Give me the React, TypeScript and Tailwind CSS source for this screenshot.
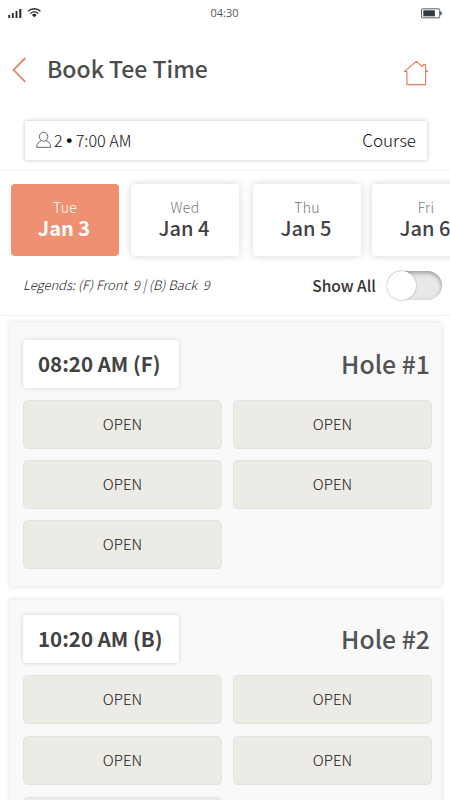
import React from "react";

type Day = { name: string; date: string; active?: boolean; gap: string };
type Slot = { time: string; hole: string; open: number; spacing: string; rows: string };

const days: Day[] = [
  { name: "Tue", date: "Jan 3", active: true, gap: "" },
  { name: "Wed", date: "Jan 4", gap: "ml-3" },
  { name: "Thu", date: "Jan 5", gap: "ml-[14px]" },
  { name: "Fri", date: "Jan 6", gap: "ml-[11px]" },
];

const slots: Slot[] = [
  { time: "08:20 AM (F)", hole: "Hole #1", open: 5, spacing: "pt-4", rows: "gap-y-[11px]" },
  { time: "10:20 AM (B)", hole: "Hole #2", open: 5, spacing: "pt-[14px]", rows: "gap-y-3" },
];

function StatusBar() {
  return (
    <div className="flex h-[26px] items-center justify-between pl-2 pr-2">
      <svg width="34" height="12" viewBox="0 0 34 12" className="w-[119px] flex-none" preserveAspectRatio="xMinYMid">
        <g fill="#22292d">
          <rect x="0.3" y="8" width="1.8" height="3" />
          <rect x="3.9" y="6" width="1.8" height="5" />
          <rect x="7.6" y="4" width="1.8" height="7" />
          <rect x="11.3" y="2" width="2" height="9" />
          <path d="M26.3 10.3l-2.4-2.4a3.4 3.4 0 0 1 4.8 0z" />
        </g>
        <g fill="none" stroke="#22292d" strokeWidth="1.3">
          <path d="M20.1 4.3a8.8 8.8 0 0 1 12.4 0" />
          <path d="M22.3 6.6a5.7 5.7 0 0 1 8 0" />
        </g>
      </svg>
      <span className="text-[11px] leading-[16px] text-[#555]" style={{ fontFamily: '"Open Sans", sans-serif' }}>
        04:30
      </span>
      <div className="flex w-[120px] justify-end">
        <svg width="21" height="11" viewBox="0 0 21 11">
          <rect x="0.5" y="0.8" width="18.2" height="9" rx="0.8" fill="white" stroke="#596165" />
          <rect x="2.3" y="2.3" width="11.6" height="6" fill="#343c41" />
          <rect x="19.2" y="3.5" width="1.4" height="3.6" fill="#40484c" />
        </svg>
      </div>
    </div>
  );
}

function Header() {
  return (
    <header className="flex h-[95px] items-start pl-3 pr-5 pt-[28px]">
      <svg width="14" height="26" viewBox="0 0 14 26" className="mt-[3px]" fill="none" stroke="#de8a6d" strokeWidth="1.8">
        <path d="M12.8 1.5L1.5 13l11.3 11.3" strokeLinecap="round" />
      </svg>
      <h1 className="ml-[21px] flex-1 text-[23px] font-medium leading-[28px] text-[#4c4c4c]">Book Tee Time</h1>
      <svg width="28" height="28" viewBox="0 0 28 28" className="mt-[5px]" fill="none" stroke="#dc8163" strokeWidth="1.2" strokeLinejoin="round">
        <path d="M4.9 12.4H2.4L14.4 2.4l6 5.2 .9-2h2.2v5.2l2 1.6h-1.9v13.2H4.9z" />
      </svg>
    </header>
  );
}

function SearchBox() {
  return (
    <div className="ml-[25px] mr-[23px] flex h-[39px] items-center bg-white pb-px pl-[11px] pr-[11px] text-[#111] shadow-[0_0_4px_rgba(0,0,0,0.25)]">
      <svg width="16" height="18" viewBox="0 0 16 18" fill="none" stroke="#555" strokeWidth="0.9">
        <ellipse cx="7.6" cy="5.7" rx="4.2" ry="4.5" />
        <path d="M5.4 9.6C2.5 10.6.8 12.5.7 16.3h14c-.1-3.8-1.8-5.7-4.8-6.7" />
      </svg>
      <div className="ml-[2px] flex flex-1 items-center text-[16.2px] font-light leading-[20px]">
        <span>2</span>
        <span className="w-[13px] pt-px text-center text-[17px] font-bold" style={{ fontFamily: '"Liberation Sans", sans-serif' }}>•</span>
        <span>7:00 AM</span>
      </div>
      <span className="text-[17px] font-light leading-[20px]">Course</span>
    </div>
  );
}

function DayCard({ day }: { day: Day }) {
  return (
    <div
      className={`${day.gap} h-[72px] w-[108px] flex-none rounded-[4px] pr-[2px] pt-[13px] text-center ${
        day.active ? "bg-[#ee9172] text-white" : "bg-white text-[#414146] shadow-[0_0_9px_rgba(0,0,0,0.17)]"
      }`}
    >
      <div className={`pl-[2px] text-[14px] font-light leading-[20px] tracking-[0.3px] ${day.active ? "text-white" : "text-[#777]"}`}>{day.name}</div>
      <div className={`text-[20px] leading-[21px] ${day.active ? "font-bold" : "font-medium"}`}>{day.date}</div>
    </div>
  );
}

function SlotCard({ slot }: { slot: Slot }) {
  return (
    <section className={`mb-3 h-[265px] rounded-[2px] border border-[#f4f4f4] bg-[#f9f9f9] pl-[13px] pr-[9px] shadow-[0_0_4px_rgba(0,0,0,0.12)] ${slot.spacing}`}>
      <div className="flex h-[50px] items-center justify-between pr-[2px]">
        <div className="h-[48px] w-[156px] rounded-[3px] bg-white pl-[15px] text-[20.5px] font-bold leading-[47px] text-[#424242] shadow-[0_0_4px_rgba(0,0,0,0.16)]">
          {slot.time}
        </div>
        <h2 className="pb-[2px] text-[24.8px] font-medium leading-[48px] text-[#535353]">{slot.hole}</h2>
      </div>
      <div className={`mt-[11px] grid grid-cols-2 gap-x-[11px] ${slot.rows}`}>
        {Array.from({ length: slot.open }, (_, i) => (
          <button key={i} className="h-[49px] rounded-[5px] border border-[#e3e3df] bg-[#ecebe6] pb-[2px] text-[15px] font-light leading-[20px] text-[#151515]">
            OPEN
          </button>
        ))}
      </div>
    </section>
  );
}

export default function App() {
  return (
    <div className="h-[800px] w-[450px] overflow-hidden bg-white" style={{ fontFamily: '"Noto Sans CJK SC", "Open Sans", sans-serif' }}>
      <StatusBar />
      <Header />
      <SearchBox />
      <div className="mt-[10px] h-[146px] border-y border-[#f4f4f4] pt-[13px]">
        <div className="flex pl-[11px]">
          {days.map((d) => (
            <DayCard key={d.date} day={d} />
          ))}
        </div>
        <div className="mt-[15px] flex h-[30px] items-center pl-[23px] pr-2">
          <p className="mb-[2px] flex-1 whitespace-pre text-[13px] font-light italic leading-[20px] text-[#222]">Legends: (F) Front  9 | (B) Back  9</p>
          <span className="mb-[2px] mr-[11px] text-[15.5px] font-medium leading-[20px] text-[#333]">Show All</span>
          <div className="mb-px flex h-[29px] w-[55px] rounded-full bg-[#e8e8e8] shadow-[inset_0_2px_4px_rgba(0,0,0,0.35)]">
            <div className="size-[29px] rounded-full bg-white shadow-[0_0_2px_rgba(0,0,0,0.35)]" />
          </div>
        </div>
      </div>
      <main className="ml-[9px] mr-2 mt-[6px]">
        {slots.map((s) => (
          <SlotCard key={s.time} slot={s} />
        ))}
      </main>
    </div>
  );
}
